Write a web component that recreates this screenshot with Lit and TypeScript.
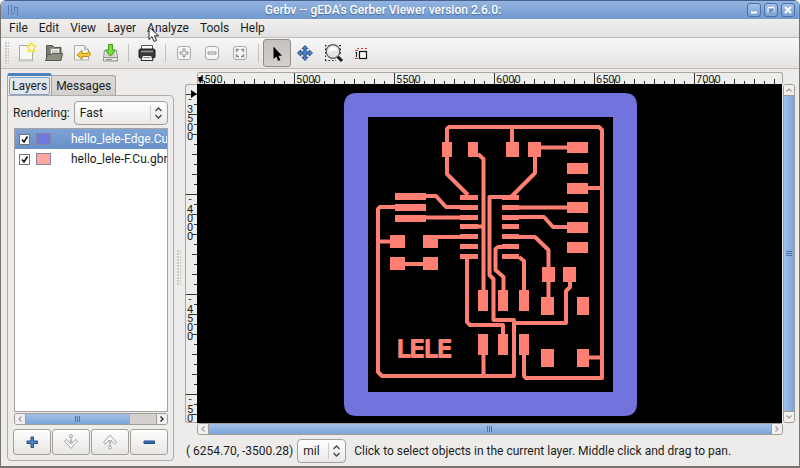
import { LitElement, html, css, svg, nothing } from "lit";
import { customElement, property, state } from "lit/decorators.js";
import { classMap } from "lit/directives/class-map.js";
import { styleMap } from "lit/directives/style-map.js";

const range = (from: number, to: number, step: number): number[] => {
  const out: number[] = [];
  for (let v = from; v <= to; v += step) out.push(v);
  return out;
};

/* ---------- toolbar icons, 24 x 24 ---------- */
const icons: Record<string, unknown> = {
  new: svg`
    <path d="M5.500 4.500h13v14.500h-13z" fill="#f6f6f4" stroke="#a9aaa5"/>
    <path d="M4 20h16" stroke="#c4c4c0"/>
    <circle cx="17.500" cy="6.500" r="5" fill="#fdf39a" opacity=".8"/>
    <path d="M17.500 1.800l1.400 3.100 3.300.4-2.500 2.200.8 3.300-3-1.700-3 1.700.8-3.300-2.500-2.200 3.300-.4z" fill="#fffde0" stroke="#ead21f"/>`,
  open: svg`
    <path d="M4.500 17V4.500h6l2 2h6.500V17z" fill="#7b7f74" stroke="#54584e"/>
    <path d="M8.500 7.500h9v8h-9z" fill="#f3f3f0" stroke="#8d8f88"/>
    <path d="M10 10h6M10 12h6" stroke="#aaaca6"/>
    <path d="M6 13.500h3l1-1h10.500l-1.500 7H3.500z" fill="#8a8f82" stroke="#565a50"/>`,
  revert: svg`
    <path d="M4.500 4.500h10l4 4V19h-14z" fill="#f4f4f2" stroke="#aeafaa"/>
    <path d="M14.500 4.500v4h4" fill="#dcdcd8" stroke="#aeafaa"/>
    <path d="M7 14l5-4.500v3h5c1 0 1.500-1 1-2.500 3 1 3.500 5.500-1 5.500h-5v3z" fill="#f5c83c" stroke="#b98b10"/>`,
  save: svg`
    <path d="M6.500 9.500h12l1 8v2.500h-14v-2.500z" fill="#e6e6e2" stroke="#8c8e88"/>
    <path d="M6 16.500h13M8 18.500h6" stroke="#8c8e88"/>
    <path d="M8 10.500h9v5H8z" fill="#c9cbc5"/>
    <path d="M10.500 3.500h4v5.500h3l-5 6-5-6h3z" fill="#7ddc3c" stroke="#479a14"/>`,
  print: svg`
    <path d="M6.500 9V4.500h11V9" fill="#fafafa" stroke="#555"/>
    <rect x="4" y="8" width="16" height="9" rx="1.500" fill="#3a3b3a" stroke="#1c1c1c"/>
    <path d="M6 10.500h12" stroke="#9a9b99" stroke-width="1.500"/>
    <path d="M7.500 14.500h9l1.500 5H6z" fill="#f2f2f0" stroke="#333"/>
    <path d="M8.500 16.500h7" stroke="#888"/>`,
  zoomIn: svg`
    <rect x="5.500" y="5.500" width="13" height="13" rx="2.500" fill="#f6f6f5" stroke="#aaa9a7"/>
    <path d="M11 8h2v3h3v2h-3v3h-2v-3H8v-2h3z" fill="#fff" stroke="#8f8f8d"/>`,
  zoomOut: svg`
    <rect x="5.500" y="5.500" width="13" height="13" rx="2.500" fill="#f6f6f5" stroke="#aaa9a7"/>
    <path d="M8 11h8v2H8z" fill="#fff" stroke="#8f8f8d"/>`,
  zoomFit: svg`
    <rect x="5.500" y="5.500" width="13" height="13" rx="2.500" fill="#f6f6f5" stroke="#aaa9a7"/>
    <path d="M8.500 11V8.500H11M13 8.500h2.500V11M15.500 13v2.500H13M11 15.500H8.500V13" fill="none" stroke="#8f8f8d" stroke-width="1.500"/>`,
  pointer: svg`
    <path d="M8.500 5.500v12.500l2.800-2.400 1.900 4.400 2.200-1-2-4.200h3.600z" fill="#000"/>`,
  move: svg`
    <path d="M12 4.500l3 3.200h-1.900v3.200h3.200V9l3.200 3-3.200 3v-1.900h-3.200v3.200H15l-3 3.200-3-3.200h1.900v-3.200H7.700V15l-3.200-3 3.200-3v1.900h3.200V7.700H9z" fill="#4f86cc" stroke="#204a87"/>`,
  zoomArea: svg`
    <path d="M4 4.500h16M4 19.500h11M4.500 4v16M19.500 4v9" stroke="#222" stroke-dasharray="1.500 2"/>
    <path d="M16.500 15.500l4.500 4.500" stroke="#1a1a1a" stroke-width="3"/>
    <circle cx="12" cy="10.500" r="6.800" fill="#e4e4e4" stroke="#555" stroke-width="1.200"/>
    <path d="M7.500 10.500c0-2.500 2-4.500 4.500-4.500s4 1 4.500 3z" fill="#fff"/>`,
  measure: svg`
    <path d="M8 7.500h2M12 7.500h2M16 7.500h2" stroke="#e3342f"/>
    <path d="M6 9.500h3M6 17.500h3" stroke="#e3342f"/>
    <path d="M7.500 11v5M6.500 12l1-1" stroke="#111"/>
    <rect x="10.500" y="10.500" width="7" height="7" fill="#f6f6f6" stroke="#111" stroke-width="1.200"/>`,
};

const addIcon = svg`<path d="M7 3h2.500v4H13.500v2.500h-4v4H7v-4H3V7h4z" fill="#4f86cc" stroke="#204a87"/>`;
const removeIcon = svg`<path d="M3 7h10.500v2.500H3z" fill="#3f74b8" stroke="#204a87"/>`;
const downIcon = svg`
  <path d="M1.500 7L8 14.500 14.500 7l-2-1.500L8.800 9.500V7H7.200v2.500L3.500 5.500z" fill="#f7f7f6" stroke="#a5a5a3"/>
  <circle cx="8" cy="2" r="1.500" fill="#fff" stroke="#a5a5a3"/><path d="M8 3.500v3.500" stroke="#a5a5a3"/>`;
const upIcon = svg`
  <path d="M1.500 8.500L8 1l6.500 7.500-2 1.500-3.700-4V8.500H7.200V6L3.500 10z" fill="#f7f7f6" stroke="#a5a5a3"/>
  <circle cx="8" cy="13.500" r="1.500" fill="#fff" stroke="#a5a5a3"/><path d="M8 8.500v3.500" stroke="#a5a5a3"/>`;

const base = css`
  :host,
  *,
  *::before,
  *::after {
    box-sizing: border-box;
  }
  button,
  select,
  input {
    font: inherit;
    color: inherit;
    margin: 0;
  }
  svg {
    display: block;
  }
`;

/* ---------- scroll bar ---------- */
@customElement("scroll-bar")
export class ScrollBar extends LitElement {
  @property({ type: Boolean, reflect: true }) vertical = false;
  @property({ type: Number }) size = 1;
  @property({ type: Boolean }) more = false;

  static styles = [
    base,
    css`
      :host {
        display: flex;
        height: 12px;
        border: 1px solid #a09d99;
        border-radius: 3px;
        background: #d3d0cd;
        overflow: hidden;
      }
      :host([vertical]) {
        flex-direction: column;
        height: auto;
        width: 12px;
      }
      .step {
        flex: none;
        display: grid;
        place-items: center;
        width: 10px;
        height: 10px;
        padding: 0;
        border: 0;
        background: #f1f0ef;
        color: #a5a29f;
      }
      .live {
        color: #222;
      }
      .track {
        flex: 1;
        display: flex;
        min-height: 0;
        border: 0 solid #a09d99;
        border-width: 0 1px;
      }
      .thumb {
        display: grid;
        place-items: center;
        background: linear-gradient(#a3c1e8, #7ca4d8);
        color: #4a76ad;
      }
      :host([vertical]) .track {
        flex-direction: column;
        border-width: 1px 0;
      }
      :host([vertical]) .thumb {
        background: linear-gradient(90deg, #a3c1e8, #7ca4d8);
      }
    `,
  ];

  render() {
    const pct = `${this.size * 100}%`;
    const v = this.vertical;
    return html`
      <button class="step" aria-label="Scroll back">
        <svg width="8" height="8" fill="none" stroke="currentColor" stroke-width="1.300">
          <path d=${v ? "M1.500 5.500L4 3l2.500 2.500" : "M5.500 1.500L3 4l2.500 2.500"} />
        </svg>
      </button>
      <div class="track">
        <div class="thumb" style=${styleMap(v ? { height: pct } : { width: pct })}>
          <svg width="6" height="6" stroke="currentColor">
            <path d=${v ? "M0 .5h6M0 2.500h6M0 4.500h6" : "M.5 0v6M2.500 0v6M4.500 0v6"} />
          </svg>
        </div>
      </div>
      <button class=${classMap({ step: true, live: this.more })} aria-label="Scroll forward">
        <svg width="8" height="8" fill="none" stroke="currentColor" stroke-width="1.300">
          <path d=${v ? "M1.500 2.500L4 5l2.500-2.500" : "M2.500 1.500L5 4 2.500 6.500"} />
        </svg>
      </button>
    `;
  }
}

/* ---------- circuit board ---------- */
type Pad = [x: number, y: number, w: number, h: number];

const icRows = [195, 205, 215, 224, 234, 244, 254];
const pads: Pad[] = [
  ...icRows.map((y): Pad => [460, y, 18, 5]),
  ...icRows.map((y): Pad => [502, y, 17, 5]),
  ...[442, 468].map((x): Pad => [x, 142, 10, 15]),
  ...[506, 528].map((x): Pad => [x, 142, 13, 15]),
  ...[193, 204, 215].map((y): Pad => [395, y, 31, 7]),
  ...[142, 163, 183, 202, 222, 242].map((y): Pad => [567, y, 21, 11]),
  ...[235, 257].flatMap((y): Pad[] => [[390, y, 15, 13], [423, y, 15, 13]]),
  ...[290, 334].flatMap((y) => [478, 498, 519].map((x): Pad => [x, y, 10, 21])),
  ...[542, 563].map((x): Pad => [x, 267, 13, 15]),
  ...[297, 349].flatMap((y): Pad[] => [[541, y, 13, 18], [577, y, 12, 18]]),
];

const traces = [
  "M468 195L447 174V129L449 127H599L602 130V378H526L524 376V354",
  "M512 127V142",
  "M478 154L483.500 159V295",
  "M483.500 226.500H478",
  "M426 196H436L446 207H460",
  "M395 207H380L378 209V372L382 376H514V320H493.500V279L489.500 275V197H502",
  "M426 217.500H460",
  "M378 241.500H390",
  "M438 237H460",
  "M405 264H423",
  "M467 257V322L470 325H503V334",
  "M483.500 354V376",
  "M514 323H566V291L570 287V281",
  "M519 237H535L548.500 250V297",
  "M541 147.500H567",
  "M535 157V173L511 197",
  "M588 188H602",
  "M519 207.500H567",
  "M519 217H544L553 227H567",
  "M519 257L524 261V290",
  "M502 247H498L495.500 249V270L503.500 277V290",
  "M589 357.500H602",
];

@customElement("board-view")
export class BoardView extends LitElement {
  static styles = css`
    :host {
      display: block;
      background: #000;
      overflow: hidden;
    }
    .board {
      display: block;
      width: 100%;
      height: 100%;
    }
    .edge {
      fill: #7373de;
    }
    .pad,
    .name {
      fill: #ff8073;
    }
    .trace {
      fill: none;
      stroke: #ff8073;
      stroke-width: 4;
      stroke-linejoin: round;
    }
    .name {
      font: 23px "DejaVu Sans", sans-serif;
      stroke: #ff8073;
      stroke-width: 2;
      stroke-linejoin: round;
    }
  `;

  render() {
    return html`
      <svg class="board" viewBox="197 84 585 339" role="img" aria-label="Board layers">
        <path
          class="edge"
          fill-rule="evenodd"
          d="M357 93H624Q637 93 637 106V403Q637 416 624 416H357Q344 416 344 403V106Q344 93 357 93ZM368 117V392H613V117Z"
        />
        ${traces.map((d) => svg`<path class="trace" d=${d} />`)}
        ${pads.map(([x, y, w, h]) => svg`<rect class="pad" x=${x} y=${y} width=${w} height=${h} />`)}
        <text class="name" x="397" y="357">LELE</text>
      </svg>
    `;
  }
}

/* ---------- rulers ---------- */
@customElement("ruler-scale")
export class RulerScale extends LitElement {
  @property({ type: Boolean, reflect: true }) vertical = false;

  static styles = css`
    :host {
      display: block;
      overflow: hidden;
      background: #ededeb;
      border: 1px solid #aaa7a3;
      border-bottom: 0;
      border-radius: 3px 3px 0 0;
    }
    :host([vertical]) {
      border-bottom: 1px solid #aaa7a3;
      border-right: 0;
      border-radius: 3px 0 0 3px;
    }
    .scale {
      display: block;
      width: 100%;
      height: 100%;
    }
    .tick {
      stroke: #333;
    }
    .num {
      font: 11px "Roboto", sans-serif;
      fill: #1c1c1c;
    }
    .stack {
      text-anchor: middle;
    }
  `;

  private across() {
    return html`<svg class="scale">
      ${range(0, 2000, 10).map((n) => {
        const x = n - 3.5;
        const len = n % 100 === 0 ? 12 : n % 20 === 0 ? 5 : 3;
        return svg`<path class="tick" d=${`M${x} ${11 - len}V11`} />`;
      })}
      ${range(0, 5, 1).map(
        (i) => svg`<text class="num" x=${i ? i * 100 - 2 : 0} y="10">${4500 + i * 500}</text>`,
      )}
      <path d="M0 4h5l-3 7z" />
    </svg>`;
  }

  private down() {
    return html`<svg class="scale">
      ${range(10, 1000, 10).map((n) => {
        const y = n - 0.5;
        const major = n % 100 === 10;
        const len = major ? 11 : n % 20 === 10 ? 5 : 3;
        return svg`<path class="tick" d=${`M${11 - len} ${y}H11`} />`;
      })}
      ${range(0, 3, 1).map((i) =>
        [...String(-3500 - i * 500)].map(
          (c, k) => svg`<text class="num stack" x="4" y=${i * 100 + 18 + (k ? k * 9 + 1 : 0)}>${c}</text>`,
        ),
      )}
      <path d="M5 5l6 4-6 4z" />
    </svg>`;
  }

  render() {
    return this.vertical ? this.down() : this.across();
  }
}

/* ---------- application window ---------- */
interface Layer {
  name: string;
  colour: string;
  visible: boolean;
}

const menus = ["File", "Edit", "View", "Layer", "Analyze", "Tools", "Help"];
const tools: [string, string][][] = [
  [["new", "New"], ["open", "Open"], ["revert", "Revert"], ["save", "Save"]],
  [["print", "Print"]],
  [["zoomIn", "Zoom in"], ["zoomOut", "Zoom out"], ["zoomFit", "Fit to window"]],
  [["pointer", "Pointer"], ["move", "Pan"], ["zoomArea", "Zoom area"], ["measure", "Measure"]],
];

@customElement("app-root")
export class AppRoot extends LitElement {
  @state() private tool = "pointer";
  @state() private selected = 0;
  @state() private layers: Layer[] = [
    { name: "hello_lele-Edge.Cu.gbr", colour: "#7379dc", visible: true },
    { name: "hello_lele-F.Cu.gbr", colour: "#ffa69e", visible: true },
  ];

  static styles = [
    base,
    css`
      :host {
        display: flex;
        flex-direction: column;
        height: 100vh;
        overflow: hidden;
        font: 12px/16px "Roboto", "Open Sans", sans-serif;
        color: #1c1c1c;
        background: #edeceb;
        border: 1px solid #77736e;
        border-top: 0;
        border-bottom-width: 2px;
        border-radius: 6px 6px 0 0;
      }
      .title {
        flex: none;
        display: flex;
        align-items: center;
        gap: 3px;
        height: 19px;
        margin: 0 -1px;
        padding: 0 5px 0 7px;
        border-top: 1px solid #44618c;
        background: linear-gradient(#94b4e0, #7099cd);
      }
      .title-text {
        flex: 1;
        margin: 0;
        text-align: center;
        font-size: 12px;
        font-weight: 500;
        color: #fff;
        text-shadow: 0 1px 1px #47689a;
      }
      .win {
        width: 14px;
        height: 14px;
        padding: 0;
        display: grid;
        place-items: center;
        border: 1px solid #4b70a5;
        border-radius: 3px;
        background: linear-gradient(#a4c1e8, #7ba1d3);
      }
      .menu {
        flex: none;
        display: flex;
        height: 19px;
        padding: 0 3px;
        background: linear-gradient(#f0efee, #e4e2e0);
        border-bottom: 1px solid #bfbcb9;
      }
      .menu-item {
        position: relative;
        padding: 0 6px 0 5px;
        border: 0;
        background: none;
        white-space: nowrap;
      }
      .cursor {
        position: absolute;
        left: 6px;
        top: 7px;
      }
      .tools {
        flex: none;
        display: flex;
        align-items: center;
        height: 31px;
        padding-left: 4px;
        background: linear-gradient(#f8f7f7, #e5e3e1);
        border-bottom: 1px solid #bfbcb9;
      }
      .grip {
        width: 7px;
        height: 22px;
        background: radial-gradient(circle at 1px 1px, #cbc8c5 1px, transparent 1px) 0 0 / 3px 3px;
        background-clip: content-box;
        padding-right: 3px;
      }
      .group {
        display: flex;
      }
      .group + .group::before {
        content: "";
        width: 1px;
        height: 18px;
        margin: 5px 4px;
        background: #c4c1be;
      }
      .tool {
        width: 28px;
        height: 28px;
        padding: 0;
        display: grid;
        place-items: center;
        border: 1px solid transparent;
        border-radius: 3px;
        background: none;
      }
      .tool.on {
        border-color: #918e8a;
        background: linear-gradient(#c4c1be, #d2cfcc);
      }
      .body {
        flex: 1;
        min-height: 0;
        display: grid;
        grid-template-columns: 167px 5px minmax(0, 1fr);
        column-gap: 3px;
        padding: 3px 4px 0 6px;
      }
      .side {
        display: flex;
        flex-direction: column;
        min-height: 0;
        padding: 1px 0 5px;
      }
      .tabs {
        display: flex;
        align-items: flex-end;
      }
      .tab {
        height: 20px;
        padding: 0 4px;
        border: 1px solid #a5a29f;
        border-left: 0;
        border-bottom: 0;
        border-radius: 0 3px 0 0;
        background: linear-gradient(#dedbd9, #d2cfcc);
        white-space: nowrap;
      }
      .tab.on {
        height: 23px;
        padding: 0 1px 1px;
        margin-bottom: -1px;
        border-left: 1px solid #a5a29f;
        border-top: 3px solid #4f7fbd;
        border-radius: 3px 3px 0 0;
        background: #edeceb;
      }
      .focus {
        display: block;
        padding: 0 2px;
        border: 1px solid #7d9fcc;
        border-radius: 2px;
        background: #e2e7ee;
      }
      .page {
        flex: 1;
        min-height: 0;
        display: flex;
        flex-direction: column;
        padding: 5px;
        border: 1px solid #aeaba8;
        border-radius: 0 4px 4px 4px;
      }
      .row {
        display: flex;
        align-items: center;
        gap: 4px;
      }
      .pick {
        position: relative;
        display: flex;
      }
      .pick.wide {
        flex: 1;
      }
      .select {
        appearance: none;
        width: 100%;
        height: 24px;
        padding: 0 20px 0 5px;
        border: 1px solid #a19e9b;
        border-radius: 4px;
        background: linear-gradient(#fefefe, #ebe9e8);
      }
      .arrows {
        position: absolute;
        right: 4px;
        top: 4px;
        pointer-events: none;
      }
      .list {
        flex: 1;
        min-height: 0;
        overflow: hidden;
        margin: 3px 0 1px 1px;
        padding: 0;
        list-style: none;
        background: #fff;
        border: 1px solid #a5a29f;
      }
      .layer {
        display: flex;
        align-items: center;
        height: 20px;
        padding-left: 4px;
        white-space: nowrap;
      }
      .layer.on {
        color: #fff;
        background: linear-gradient(#7ea3d6, #6690c8);
      }
      .check {
        appearance: none;
        flex: none;
        width: 11px;
        height: 11px;
        border: 1px solid #77746f;
        background: #fff;
      }
      .tick-box {
        position: relative;
        display: grid;
      }
      .mark {
        position: absolute;
        inset: 0;
        pointer-events: none;
      }
      .swatch {
        flex: none;
        width: 15px;
        height: 12px;
        margin: 0 20px 0 6px;
        border: 1px solid #8885a0;
      }
      .actions {
        display: grid;
        grid-template-columns: repeat(4, 1fr);
        gap: 1px;
        margin-top: 4px;
      }
      .action {
        height: 26px;
        padding: 0;
        display: grid;
        place-items: center;
        border: 1px solid #a3a09c;
        border-radius: 3px;
        background: linear-gradient(#fdfdfd, #e8e6e4);
      }
      .list-scroll {
        margin-left: 1px;
      }
      .splitter {
        align-self: center;
        height: 36px;
        margin-bottom: 2px;
      }
      .main {
        min-width: 0;
        display: grid;
        grid-template-columns: 12px minmax(0, 1fr) 12px;
        grid-template-rows: 12px minmax(0, 1fr) 12px 31px;
      }
      .top {
        grid-column: 2;
      }
      .left {
        grid-area: 2 / 1;
      }
      .board {
        grid-area: 2 / 2;
        margin-right: 1px;
      }
      .vbar {
        grid-area: 2 / 3;
      }
      .hbar {
        grid-area: 3 / 2;
      }
      .status {
        grid-area: 4 / 1 / 5 / 4;
        display: flex;
        align-items: center;
        gap: 4px;
        padding-left: 1px;
        white-space: nowrap;
      }
      .hint {
        padding-left: 4px;
      }
    `,
  ];

  private toggle(i: number) {
    this.layers = this.layers.map((l, k) => (k === i ? { ...l, visible: !l.visible } : l));
  }

  private arrows() {
    return html`<svg class="arrows" width="14" height="16" fill="none">
      <path d="M.5 0v16" stroke="#cfccc9" />
      <path d="M5.500 6l3-3 3 3M5.500 10l3 3 3-3" stroke="#444" stroke-width="1.300" />
    </svg>`;
  }

  render() {
    return html`
      <header class="title">
        <svg width="12" height="12" stroke="#5b7caa" fill="none">
          <path d="M1.500 1v10M4.500 1v7M4 9.500h3M7.500 2v6M10.500 3v8M7 3.500h3" />
        </svg>
        <h1 class="title-text">Gerbv -- gEDA's Gerber Viewer version 2.6.0:</h1>
        <button class="win" aria-label="Minimize">
          <svg width="10" height="10"><path d="M2 7.500h6" stroke="#fff" stroke-width="2" /></svg>
        </button>
        <button class="win" aria-label="Maximize">
          <svg width="10" height="10" fill="none">
            <path d="M2 8V2.500h6V7" stroke="#fff" /><path d="M4 8V5h4" stroke="#54749f" />
          </svg>
        </button>
        <button class="win" aria-label="Close">
          <svg width="10" height="10"><path d="M2 2l6 6M8 2l-6 6" stroke="#fff" stroke-width="2" /></svg>
        </button>
      </header>

      <nav class="menu">
        ${menus.map(
          (m) => html`<button class="menu-item">
            ${m}${m === "Analyze"
              ? html`<svg class="cursor" width="12" height="17">
                  <path d="M1 1v12.500l3-2.800 2 4.800 2.500-1-2-4.700h4z" fill="#fff" stroke="#222" />
                </svg>`
              : nothing}
          </button>`,
        )}
      </nav>

      <div class="tools" role="toolbar">
        <span class="grip"></span>
        ${tools.map(
          (group) => html`<div class="group">
            ${group.map(
              ([id, label]) => html`<button
                class=${classMap({ tool: true, on: this.tool === id })}
                aria-label=${label}
                @click=${() => (this.tool = id)}
              >
                <svg width="24" height="24" fill="none">${icons[id]}</svg>
              </button>`,
            )}
          </div>`,
        )}
      </div>

      <main class="body">
        <section class="side">
          <div class="tabs" role="tablist">
            <button class="tab on" role="tab" aria-selected="true"><span class="focus">Layers</span></button>
            <button class="tab" role="tab" aria-selected="false">Messages</button>
          </div>
          <div class="page">
            <div class="row">
              <label for="rendering">Rendering:</label>
              <span class="pick wide">
                <select class="select" id="rendering">
                  <option>Fast</option>
                  <option>Normal</option>
                  <option>High quality</option>
                </select>
                ${this.arrows()}
              </span>
            </div>
            <ul class="list">
              ${this.layers.map(
                (l, i) => html`<li
                  class=${classMap({ layer: true, on: this.selected === i })}
                  @click=${() => (this.selected = i)}
                >
                  <span class="tick-box">
                    <input
                      class="check"
                      type="checkbox"
                      id=${`layer-${i}`}
                      .checked=${l.visible}
                      @change=${() => this.toggle(i)}
                    />
                    ${l.visible
                      ? html`<svg class="mark" width="11" height="11" fill="none">
                          <path d="M3 5.500l2 2.500 3.500-5.500" stroke="#111" stroke-width="1.600" />
                        </svg>`
                      : nothing}
                  </span>
                  <span class="swatch" style=${styleMap({ background: l.colour })}></span>
                  <label for=${`layer-${i}`}>${l.name}</label>
                </li>`,
              )}
            </ul>
            <scroll-bar class="list-scroll" .size=${0.8} .more=${true}></scroll-bar>
            <div class="actions">
              <button class="action" aria-label="Add layer"><svg width="16" height="16">${addIcon}</svg></button>
              <button class="action" aria-label="Move down"><svg width="16" height="16">${downIcon}</svg></button>
              <button class="action" aria-label="Move up"><svg width="16" height="16">${upIcon}</svg></button>
              <button class="action" aria-label="Remove layer"><svg width="16" height="16">${removeIcon}</svg></button>
            </div>
          </div>
        </section>

        <span class="grip splitter"></span>

        <section class="main">
          <ruler-scale class="top"></ruler-scale>
          <ruler-scale class="left" vertical></ruler-scale>
          <board-view class="board"></board-view>
          <scroll-bar class="vbar" vertical></scroll-bar>
          <scroll-bar class="hbar"></scroll-bar>
          <footer class="status">
            <output>( 6254.70, -3500.28)</output>
            <span class="pick">
              <select class="select" aria-label="Units">
                <option>mil</option>
                <option>mm</option>
                <option>in</option>
              </select>
              ${this.arrows()}
            </span>
            <span class="hint">Click to select objects in the current layer. Middle click and drag to pan.</span>
          </footer>
        </section>
      </main>
    `;
  }
}
